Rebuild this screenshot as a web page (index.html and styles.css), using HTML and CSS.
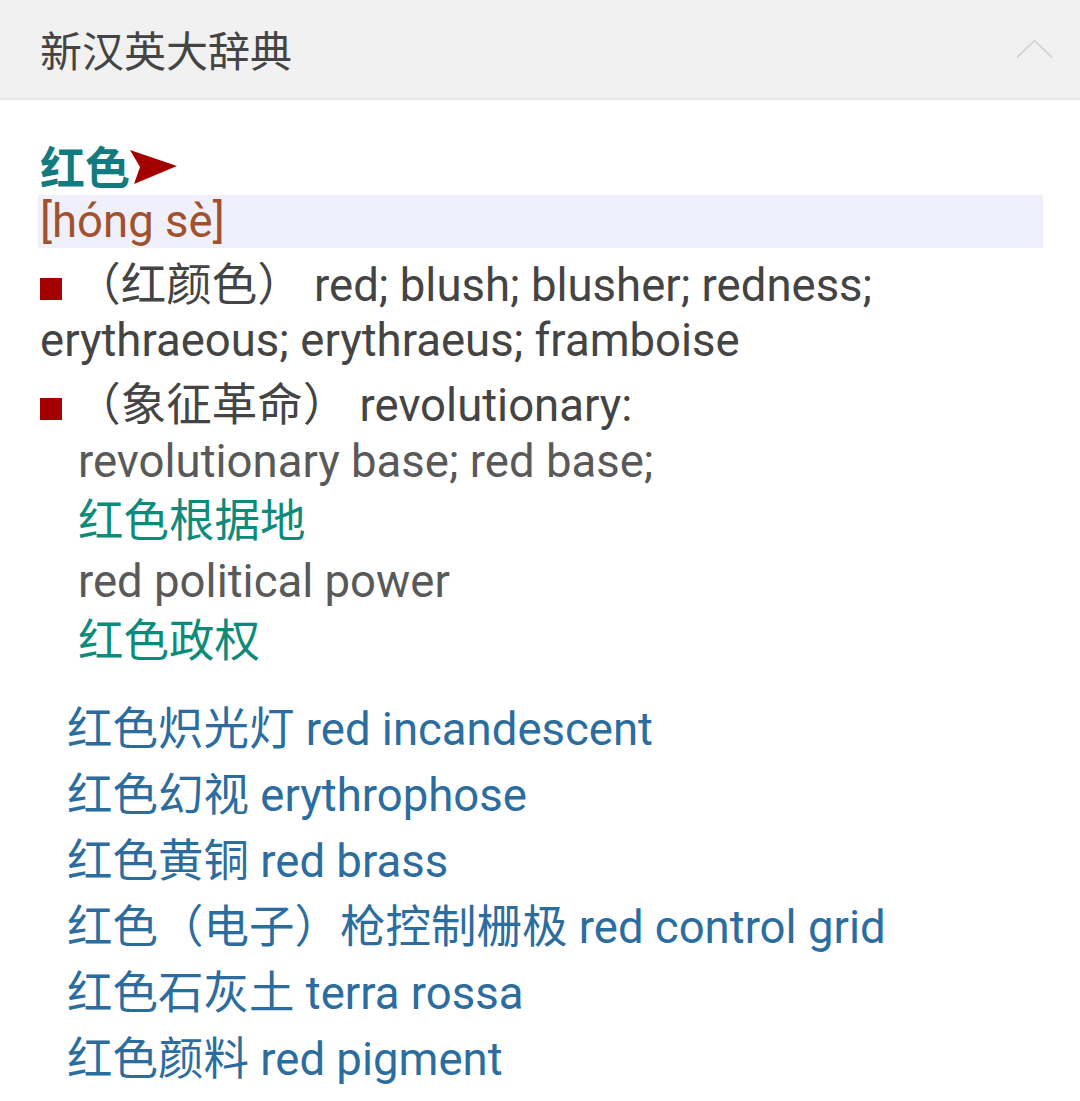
FILE: index.html
```html
<!DOCTYPE html>
<html lang="zh">
<head>
<meta charset="utf-8">
<link rel="stylesheet" href="styles.css">
</head>
<body>
<div class="header">
  <span class="title">新汉英大辞典</span>
  <svg class="chevron" width="37" height="20" viewBox="0 0 37 20"><polyline points="1,18.5 18.5,1.5 36,18.5" fill="none" stroke="#cfcfcf" stroke-width="1.6"/></svg>
</div>
<div class="content">
  <div class="headword">红色<svg class="arrow" width="47" height="34" viewBox="0 0 47 34"><polygon points="0,0 47,16 4,34 10,17" fill="#a40000"/></svg></div>
  <div class="pinyin">[hóng sè]</div>
  <div class="sense"><span class="bullet"></span> （红颜色） red; blush; blusher; redness; erythraeous; erythraeus; framboise</div>
  <div class="sense"><span class="bullet"></span> （象征革命） revolutionary:
    <div class="examples">
      <div class="ex-en">revolutionary base; red base;</div>
      <div class="ex-zh">红色根据地</div>
      <div class="ex-en">red political power</div>
      <div class="ex-zh">红色政权</div>
    </div>
  </div>
  <ul class="related">
    <li>红色炽光灯 red incandescent</li>
    <li>红色幻视 erythrophose</li>
    <li>红色黄铜 red brass</li>
    <li>红色（电子）枪控制栅极 red control grid</li>
    <li>红色石灰土 terra rossa</li>
    <li>红色颜料 red pigment</li>
  </ul>
</div>
</body>
</html>
```
FILE: styles.css
```css
html, body {
  margin: 0;
  padding: 0;
  background: #ffffff;
}
body {
  font-family: Roboto, "Noto Sans CJK SC", sans-serif;
  width: 1080px;
  height: 1101px;
  overflow: hidden;
}
.header {
  height: 98px;
  background: #f1f1f1;
  border-bottom: 2px solid #e7e7e7;
  display: flex;
  align-items: center;
  justify-content: space-between;
  padding: 0 27px 0 40px;
}
.title {
  font-family: "Noto Sans CJK SC", sans-serif;
  font-size: 42px;
  color: #444444;
  line-height: 1;
}
.chevron {
  display: block;
  margin-top: 0;
}
.content {
  padding: 38px 37px 0 40px;
}
.headword {
  font-family: "Noto Sans CJK SC", sans-serif;
  font-weight: 700;
  font-size: 45px;
  color: #127b80;
  line-height: 55px;
  display: flex;
  align-items: center;
}
.arrow {
  display: block;
  margin-top: 2px;
}
.pinyin {
  background: #f0f0fd;
  color: #a0522d;
  font-size: 45.5px;
  line-height: 53px;
  margin-top: 2px;
  margin-left: -2px;
  padding-left: 2px;
}
.sense {
  color: #444444;
  font-size: 45.5px;
  line-height: 55px;
  margin-top: 10px;
}
.bullet {
  display: inline-block;
  width: 22px;
  height: 22px;
  background: #a50000;
  margin-right: 2px;
  vertical-align: 1px;
}
.examples {
  padding-left: 38px;
  margin-top: 0;
}
.ex-en {
  color: #595959;
  line-height: 58px;
}
.ex-zh {
  color: #0e8a7a;
  line-height: 62px;
}
.related {
  list-style: none;
  margin: 24px 0 0 0;
  padding: 0 0 0 27px;
  color: #2c6da0;
  font-size: 45.5px;
}
.related li {
  line-height: 66px;
}
```
